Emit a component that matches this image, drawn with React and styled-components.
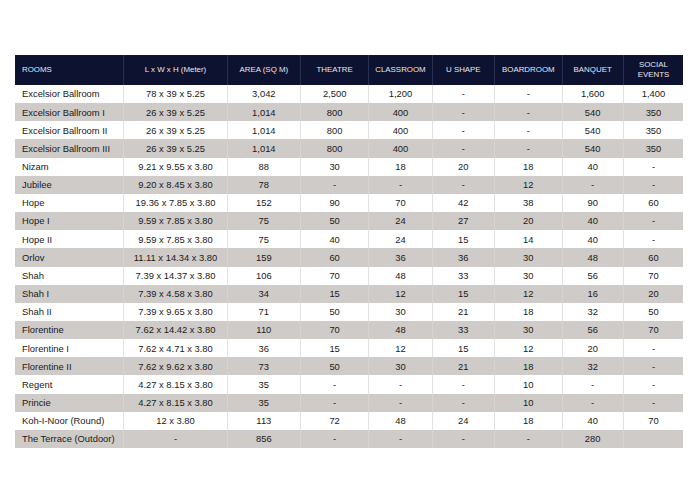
import * as React from "react";
import styled, { createGlobalStyle } from "styled-components";

const COLS = "108.3px 103.4px 73.3px 68.3px 63.4px 62.3px 67.7px 61px 60.6px";

const headers = [
  "ROOMS",
  "L x W x H (Meter)",
  "AREA (SQ M)",
  "THEATRE",
  "CLASSROOM",
  "U SHAPE",
  "BOARDROOM",
  "BANQUET",
  "SOCIAL\nEVENTS",
];

const rooms = [
  ["Excelsior Ballroom", "78 x 39 x 5.25", "3,042", "2,500", "1,200", "-", "-", "1,600", "1,400"],
  ["Excelsior Ballroom I", "26 x 39 x 5.25", "1,014", "800", "400", "-", "-", "540", "350"],
  ["Excelsior Ballroom II", "26 x 39 x 5.25", "1,014", "800", "400", "-", "-", "540", "350"],
  ["Excelsior Ballroom III", "26 x 39 x 5.25", "1,014", "800", "400", "-", "-", "540", "350"],
  ["Nizam", "9.21 x 9.55 x 3.80", "88", "30", "18", "20", "18", "40", "-"],
  ["Jubilee", "9.20 x 8.45 x 3.80", "78", "-", "-", "-", "12", "-", "-"],
  ["Hope", "19.36 x 7.85 x 3.80", "152", "90", "70", "42", "38", "90", "60"],
  ["Hope I", "9.59 x 7.85 x 3.80", "75", "50", "24", "27", "20", "40", "-"],
  ["Hope II", "9.59 x 7.85 x 3.80", "75", "40", "24", "15", "14", "40", "-"],
  ["Orlov", "11.11 x 14.34 x 3.80", "159", "60", "36", "36", "30", "48", "60"],
  ["Shah", "7.39 x 14.37 x 3.80", "106", "70", "48", "33", "30", "56", "70"],
  ["Shah I", "7.39 x 4.58 x 3.80", "34", "15", "12", "15", "12", "16", "20"],
  ["Shah II", "7.39 x 9.65 x 3.80", "71", "50", "30", "21", "18", "32", "50"],
  ["Florentine", "7.62 x 14.42 x 3.80", "110", "70", "48", "33", "30", "56", "70"],
  ["Florentine I", "7.62 x 4.71 x 3.80", "36", "15", "12", "15", "12", "20", "-"],
  ["Florentine II", "7.62 x 9.62 x 3.80", "73", "50", "30", "21", "18", "32", "-"],
  ["Regent", "4.27 x 8.15 x 3.80", "35", "-", "-", "-", "10", "-", "-"],
  ["Princie", "4.27 x 8.15 x 3.80", "35", "-", "-", "-", "10", "-", "-"],
  ["Koh-I-Noor (Round)", "12 x 3.80", "113", "72", "48", "24", "18", "40", "70"],
  ["The Terrace (Outdoor)", "-", "856", "-", "-", "-", "-", "280", ""],
];

const GlobalStyle = createGlobalStyle`
  html, body {
    margin: 0;
    padding: 0;
    background: #ffffff;
  }
  body {
    font-family: "Liberation Sans", Arial, sans-serif;
  }
`;

const Page = styled.div`
  width: 700px;
  height: 500px;
  padding: 54.7px 0 0 15px;
  box-sizing: border-box;
`;

const Table = styled.div`
  width: 668px;
  display: grid;
  grid-template-rows: 30.3px repeat(20, 18.17px);
`;

const Row = styled.div`
  display: grid;
  grid-template-columns: ${COLS};
  background: ${(p) => (p.$head ? "#0c1230" : p.$shade ? "#cfcbc8" : "#ffffff")};
  color: ${(p) => (p.$head ? "#e6e8ef" : "#1a1a1a")};
`;

const Cell = styled.div`
  display: flex;
  align-items: center;
  justify-content: ${(p) => (p.$left ? "flex-start" : "center")};
  padding-left: ${(p) => (p.$left ? "7px" : "0")};
  text-align: center;
  white-space: pre-line;
  font-size: ${(p) => (p.$head ? "7.9px" : "9.4px")};
  line-height: ${(p) => (p.$head ? "9.4px" : "1")};
  border-left: 1px solid
    ${(p) => (p.$head ? "#283052" : p.$shade ? "#d6d3d0" : "#e4e2e0")};
  box-sizing: border-box;
  &:first-child {
    border-left: none;
  }
`;

export default function App() {
  return (
    <Page>
      <GlobalStyle />
      <Table>
        <Row $head>
          {headers.map((h, i) => (
            <Cell key={h} $head $left={i === 0}>
              {h}
            </Cell>
          ))}
        </Row>
        {rooms.map((r, ri) => (
          <Row key={r[0]} $shade={ri % 2 === 1}>
            {r.map((v, i) => (
              <Cell key={i} $left={i === 0} $shade={ri % 2 === 1}>
                {v}
              </Cell>
            ))}
          </Row>
        ))}
      </Table>
    </Page>
  );
}
